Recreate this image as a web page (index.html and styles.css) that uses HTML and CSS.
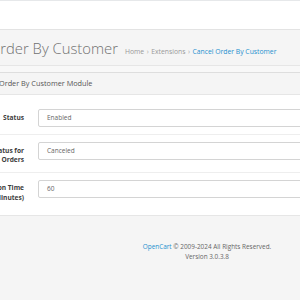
FILE: index.html
```html
<!DOCTYPE html>
<html>
<head>
<meta charset="utf-8">
<link rel="stylesheet" href="styles.css">
</head>
<body>
<div class="topline"></div>
<div class="top-space"></div>
<div class="content">
  <div class="page-header">
    <h1 class="title">Order By Customer</h1>
    <ul class="breadcrumb">
      <li><a href="#">Home</a></li>
      <li><a href="#">Extensions</a></li>
      <li><a href="#" class="current">Cancel Order By Customer</a></li>
    </ul>
  </div>
  <div class="gap"></div>
  <div class="panel">
    <div class="panel-heading">Order By Customer Module</div>
    <div class="panel-body">
      <div class="form-group">
        <label class="control-label">Status</label>
        <div class="form-control">Enabled</div>
      </div>
      <div class="form-group">
        <label class="control-label">Cancel Order Status for<br>Orders</label>
        <div class="form-control">Canceled</div>
      </div>
      <div class="form-group">
        <label class="control-label">Cancellation Time<br>(in Minutes)</label>
        <div class="form-control">60</div>
      </div>
    </div>
  </div>
</div>
<footer class="footer">
  <p><a href="#">OpenCart</a> &copy; 2009-2024 All Rights Reserved.<br>Version 3.0.3.8</p>
</footer>
</body>
</html>
```
FILE: styles.css
```css
html, body {
  margin: 0;
  padding: 0;
  overflow: hidden;
  background: #f5f5f5;
  font-family: "Open Sans", "Liberation Sans", sans-serif;
}
.topline {
  height: 1px;
  background: #e6e8ea;
}
.top-space {
  height: 28px;
  background: #fff;
}
.content {
  margin-left: -114px;
  width: 430px;
  background: #f8f8f8;
}
.page-header {
  box-sizing: border-box;
  height: 37px;
  border-top: 1px solid #e3e3e3;
  border-bottom: 1px solid #e6e6e6;
  background: #f5f5f5;
  padding-left: 103px;
  display: flex;
  align-items: baseline;
  padding-top: 8px;
}
.title {
  margin: 0;
  font-size: 14.8px;
  font-weight: 300;
  color: #717171;
  line-height: 20px;
  white-space: nowrap;
}
.breadcrumb {
  list-style: none;
  margin: 0 0 0 7px;
  padding: 0;
  display: flex;
  font-size: 6.8px;
  white-space: nowrap;
}
.breadcrumb li + li::before {
  content: "\203A";
  color: #aaa;
  padding: 0 2.5px;
}
.breadcrumb a {
  color: #999;
  text-decoration: none;
}
.breadcrumb a.current {
  color: #1e91cf;
}
.gap {
  height: 6px;
}
.panel {
  border-top: 1px solid #dedede;
  background: #fff;
}
.panel-heading {
  box-sizing: border-box;
  height: 22px;
  background: #f5f5f5;
  border-bottom: 1px solid #e6e6e6;
  padding-left: 113px;
  font-size: 7.3px;
  line-height: 21px;
  color: #555;
  white-space: nowrap;
}
.panel-body {
  padding: 7px 0 6px;
}
.form-group {
  display: grid;
  grid-template-columns: 138px 1fr;
  column-gap: 14px;
  padding: 7px 8px 7px 0;
  align-items: start;
}
.form-group + .form-group {
  border-top: 1px solid #eeeeee;
}
.control-label {
  text-align: right;
  font-size: 6.6px;
  font-weight: 700;
  color: #3d3d3d;
  line-height: 9.5px;
  padding-top: 3.5px;
  white-space: nowrap;
}
.form-control {
  box-sizing: border-box;
  height: 18px;
  border: 1px solid #d4d4d4;
  border-radius: 2px;
  padding: 0 8px;
  font-size: 6.5px;
  line-height: 16px;
  color: #666;
  background: #fff;
}
.footer {
  border-top: 1px solid #e6e6e6;
  padding-left: 114px;
  padding-top: 26px;
  text-align: center;
  font-size: 6.4px;
  line-height: 10px;
  color: #666;
}
.footer p {
  margin: 0;
}
.footer a {
  color: #1e91cf;
  text-decoration: none;
}
```
